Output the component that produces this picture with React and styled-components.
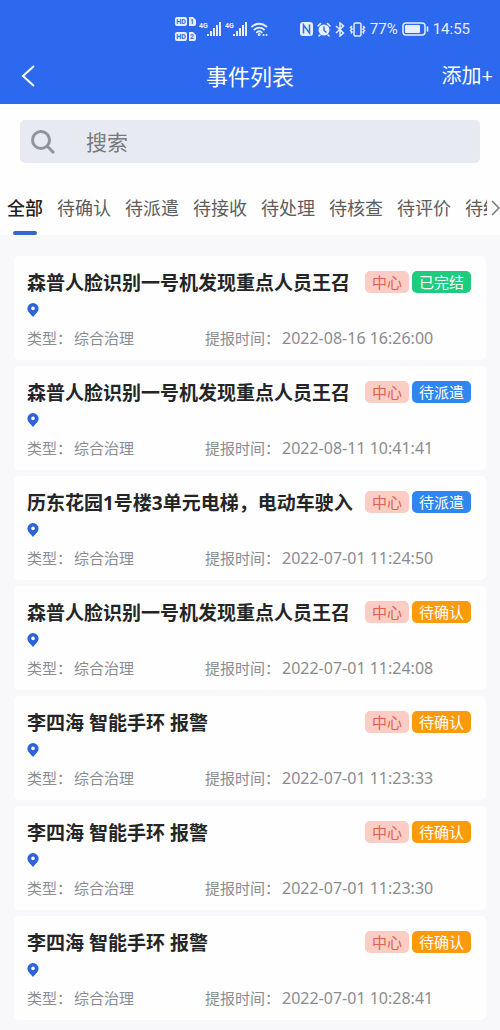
import React, { useState } from "react";
import styled, { createGlobalStyle } from "styled-components";

const GlobalStyle = createGlobalStyle`
  * {
    box-sizing: border-box;
  }
  body {
    margin: 0;
    background: #f8f8fb;
    font-family: "Noto Sans", "Noto Sans CJK SC", sans-serif;
  }
  button, input {
    font-family: inherit;
    border: none;
    padding: 0;
    background: none;
  }
`;

const TABS = ["全部", "待确认", "待派遣", "待接收", "待处理", "待核查", "待评价", "待结案"];

const STATUS_COLORS = {
  已完结: "#1fcb7d",
  待派遣: "#2f86f0",
  待确认: "#fb9b0c",
};

const EVENTS = [
  { title: "森普人脸识别一号机发现重点人员王召", status: "已完结", time: "2022-08-16 16:26:00" },
  { title: "森普人脸识别一号机发现重点人员王召", status: "待派遣", time: "2022-08-11 10:41:41" },
  { title: "历东花园1号楼3单元电梯，电动车驶入", status: "待派遣", time: "2022-07-01 11:24:50" },
  { title: "森普人脸识别一号机发现重点人员王召", status: "待确认", time: "2022-07-01 11:24:08" },
  { title: "李四海 智能手环 报警", status: "待确认", time: "2022-07-01 11:23:33" },
  { title: "李四海 智能手环 报警", status: "待确认", time: "2022-07-01 11:23:30" },
  { title: "李四海 智能手环 报警", status: "待确认", time: "2022-07-01 10:28:41" },
];

const SimIcon = () => (
  <svg width="21" height="26" viewBox="0 0 21 26" fill="#e6eeff">
    <rect x="0" y="1" width="12" height="9" rx="2" />
    <path d="M14 1h4l3 3v4a2 2 0 0 1-2 2h-5z" />
    <rect x="0" y="16" width="12" height="9" rx="2" />
    <path d="M14 16h4l3 3v4a2 2 0 0 1-2 2h-5z" />
    <g fill="#2d69ee" fontFamily="Roboto, sans-serif" fontSize="7" fontWeight="700" textAnchor="middle">
      <text x="6" y="8">HD</text>
      <text x="17" y="8">1</text>
      <text x="6" y="23">HD</text>
      <text x="17" y="23">2</text>
    </g>
  </svg>
);

const SignalIcon = () => (
  <svg width="23" height="16" viewBox="0 0 23 16" fill="#e6eeff">
    <text x="0" y="7" fontFamily="Roboto, sans-serif" fontSize="7" fontWeight="700">4G</text>
    <rect x="8" y="13" width="2" height="2" />
    <rect x="11" y="10" width="2" height="5" />
    <rect x="14" y="7" width="2" height="8" />
    <rect x="17" y="4" width="2" height="11" />
    <rect x="20" y="1" width="2" height="14" />
  </svg>
);

const WifiIcon = () => (
  <svg width="17" height="15" viewBox="0 0 17 15" fill="none" stroke="#e6eeff" strokeWidth="1.8" strokeLinecap="round">
    <path d="M1 4.6a10.6 10.6 0 0 1 14.5 0" />
    <path d="M3.4 7.6a7 7 0 0 1 9.700 0" />
    <path d="M5.8 10.4a3.6 3.6 0 0 1 4.900 0" />
    <circle cx="8.2" cy="12.6" r="0.6" />
    <path d="M12.5 13h.1M15.500 13h.1" strokeWidth="2" />
  </svg>
);

const NfcIcon = () => (
  <svg width="13" height="14" viewBox="0 0 13 14">
    <rect width="13" height="14" rx="3" fill="#e6eeff" />
    <path d="M3.5 11.5V3l6 8V2.5" fill="none" stroke="#2d69ee" strokeWidth="1.5" />
  </svg>
);

const AlarmIcon = () => (
  <svg width="14" height="15" viewBox="0 0 14 15" fill="none" strokeLinecap="round">
    <circle cx="7" cy="8" r="5.5" fill="#e6eeff" />
    <path d="M1 4l2.5-2.5M13 4l-2.5-2.5M3 13l-1 1M11 13l1 1" stroke="#e6eeff" strokeWidth="1.6" />
    <path d="M7 5v3.5l2 1.5" stroke="#2d69ee" strokeWidth="1.4" />
  </svg>
);

const BluetoothIcon = () => (
  <svg width="10" height="15" viewBox="0 0 10 15" fill="none" stroke="#e6eeff" strokeWidth="1.5">
    <path d="M1 4l7.500 7L5 14V1l3.5 3L1 11" />
  </svg>
);

const VibrateIcon = () => (
  <svg width="17" height="15" viewBox="0 0 17 15" fill="none" stroke="#e6eeff" strokeWidth="1.5">
    <rect x="5" y="1" width="7" height="13" rx="1.5" />
    <path d="M3 4L1.500 5.500 3 7 1.500 8.500 3 10l-1 1.500M14 4l1.500 1.500L14 7l1.500 1.500L14 10l1 1.500" />
  </svg>
);

const BatteryIcon = () => (
  <svg width="27" height="14" viewBox="0 0 27 14" fill="none">
    <rect x="1" y="1" width="22" height="12" rx="3" stroke="#e6eeff" strokeWidth="1.5" />
    <rect x="3" y="3" width="15" height="8" rx="1" fill="#e6eeff" />
    <path d="M25.5 5v4" stroke="#e6eeff" strokeWidth="1.6" strokeLinecap="round" />
  </svg>
);

const PinIcon = () => (
  <svg width="12" height="14" viewBox="0 0 12 14">
    <path d="M6 0a5.600 5.600 0 0 0-5.600 5.600C.4 9 4 11.500 6 14c2-2.500 5.600-5 5.600-8.400A5.600 5.600 0 0 0 6 0z" fill="#2c62dc" />
    <circle cx="6" cy="5.400" r="1.800" fill="#fff" />
  </svg>
);

const EventCard = ({ event }) => (
  <Card>
    <TitleRow>
      <Title>{event.title}</Title>
      <Tag $bg="#fccdc5" $color="#e2604f">中心</Tag>
      <Tag $bg={STATUS_COLORS[event.status]} $color="#fff">{event.status}</Tag>
    </TitleRow>
    <Location>
      <PinIcon />
    </Location>
    <Meta>
      <MetaItem>
        <span>类型：</span>
        <span>综合治理</span>
      </MetaItem>
      <MetaItem>
        <span>提报时间：</span>
        <time>{event.time}</time>
      </MetaItem>
    </Meta>
  </Card>
);

export default function App() {
  const [active, setActive] = useState("全部");
  const [keyword, setKeyword] = useState("");

  return (
    <Page>
      <GlobalStyle />
      <Header>
        <StatusBar>
          <StatusGroup $gap="3px">
            <SimIcon />
            <SignalIcon />
            <SignalIcon />
            <WifiIcon />
          </StatusGroup>
          <StatusGroup $gap="4px">
            <NfcIcon />
            <AlarmIcon />
            <BluetoothIcon />
            <VibrateIcon />
            <StatusText>77%</StatusText>
            <BatteryIcon />
            <StatusText>14:55</StatusText>
          </StatusGroup>
        </StatusBar>
        <NavBar>
          <BackButton type="button" aria-label="返回">
            <svg width="14" height="22" viewBox="0 0 14 22" fill="none" stroke="#fff" strokeWidth="2">
              <path d="M13 1L2 11l11 10" />
            </svg>
          </BackButton>
          <PageTitle>事件列表</PageTitle>
          <AddButton type="button">添加+</AddButton>
        </NavBar>
      </Header>

      <Top>
        <SearchBox>
          <svg width="24" height="24" viewBox="0 0 24 24" fill="none" stroke="#929398" strokeWidth="3">
            <circle cx="10" cy="10" r="8.5" />
            <path d="M16 16l7 7" />
          </svg>
          <SearchInput
            type="search"
            aria-label="搜索"
            placeholder="搜索"
            value={keyword}
            onChange={(e) => setKeyword(e.target.value)}
          />
        </SearchBox>
        <TabBar>
          <TabList>
            {TABS.map((tab) => (
              <Tab key={tab} type="button" $active={tab === active} onClick={() => setActive(tab)}>
                {tab}
              </Tab>
            ))}
          </TabList>
          <MoreButton type="button" aria-label="更多">
            <svg width="9" height="18" viewBox="0 0 9 18" fill="none" stroke="#77787c" strokeWidth="1.5">
              <path d="M1 2l7 7-7 7" />
            </svg>
          </MoreButton>
        </TabBar>
      </Top>

      <List>
        {EVENTS.map((event, i) => (
          <EventCard key={i} event={event} />
        ))}
      </List>
    </Page>
  );
}

const Page = styled.div`
  min-height: 100vh;
  overflow: hidden;
`;

const Header = styled.header`
  background: #2d69ee;
  color: #fff;
`;

const StatusBar = styled.div`
  display: flex;
  justify-content: flex-end;
  align-items: center;
  gap: 32px;
  height: 48px;
  padding: 10px 30px 0 0;
`;

const StatusGroup = styled.div`
  display: flex;
  align-items: center;
  gap: ${({ $gap }) => $gap};
`;

const StatusText = styled.span`
  font-family: Roboto, sans-serif;
  font-size: 15px;
  color: #e6eeff;
`;

const NavBar = styled.div`
  display: grid;
  grid-template-columns: 1fr auto 1fr;
  align-items: center;
  height: 56px;
  padding: 0 7px 0 21px;
`;

const BackButton = styled.button`
  display: flex;
  justify-self: start;
  cursor: pointer;
`;

const PageTitle = styled.h1`
  margin: 0;
  padding-right: 14px;
  font-size: 22px;
  font-weight: 400;
  line-height: 32px;
`;

const AddButton = styled.button`
  justify-self: end;
  color: #fff;
  font-size: 20px;
  line-height: 32px;
  cursor: pointer;
`;

const Top = styled.div`
  padding-top: 16px;
  background: #fefefe;
`;

const SearchBox = styled.label`
  display: flex;
  align-items: center;
  gap: 31px;
  height: 43px;
  margin: 0 20px;
  padding: 0 11px;
  border-radius: 5px;
  background: #e8eaf2;
`;

const SearchInput = styled.input`
  flex: 1;
  min-width: 0;
  outline: none;
  font-size: 21px;
  color: #333;

  &::placeholder {
    color: #77787c;
    opacity: 1;
  }
`;

const TabBar = styled.nav`
  display: flex;
  height: 72px;
  padding-top: 18px;
`;

const TabList = styled.div`
  display: flex;
  flex: 1;
  gap: 14px;
  min-width: 0;
  padding-left: 7px;
  overflow: hidden;
`;

const Tab = styled.button`
  display: flex;
  flex: none;
  flex-direction: column;
  align-items: center;
  justify-content: space-between;
  padding-top: 14px;
  color: ${({ $active }) => ($active ? "#222" : "#5c5d60")};
  font-size: 18px;
  font-weight: ${({ $active }) => ($active ? 500 : 400)};
  line-height: 26px;
  cursor: pointer;

  &::after {
    content: "";
    width: 24px;
    height: 4px;
    border-radius: 2px;
    background: ${({ $active }) => ($active ? "#3766cf" : "transparent")};
  }
`;

const MoreButton = styled.button`
  display: flex;
  align-items: center;
  justify-content: flex-end;
  width: 13px;
  cursor: pointer;
`;

const List = styled.main`
  display: flex;
  flex-direction: column;
  gap: 6px;
  padding: 21px 14px 10px;
`;

const Card = styled.article`
  padding: 11px 15px 9px 13px;
  border-radius: 5px;
  background: #fefefe;
`;

const TitleRow = styled.div`
  display: flex;
  align-items: center;
  gap: 3px;
  height: 30px;
`;

const Title = styled.h2`
  flex: 1;
  min-width: 0;
  margin: 0;
  padding-top: 2px;
  overflow: hidden;
  white-space: nowrap;
  color: #242527;
  font-size: 19px;
  font-weight: 700;
  line-height: 30px;
`;

const Tag = styled.span`
  flex: none;
  padding: 0 7px;
  border-radius: 5px;
  background: ${({ $bg }) => $bg};
  color: ${({ $color }) => $color};
  font-size: 15px;
  line-height: 22px;
`;

const Location = styled.div`
  display: flex;
  align-items: center;
  height: 26px;
`;

const Meta = styled.div`
  display: grid;
  grid-template-columns: 178px 1fr;
  margin-top: 2px;
  color: #8b8c90;
  font-size: 15px;
  line-height: 26px;
`;

const MetaItem = styled.div`
  display: flex;
  gap: 2px;
  white-space: nowrap;

  time {
    font-size: 16px;
  }
`;
